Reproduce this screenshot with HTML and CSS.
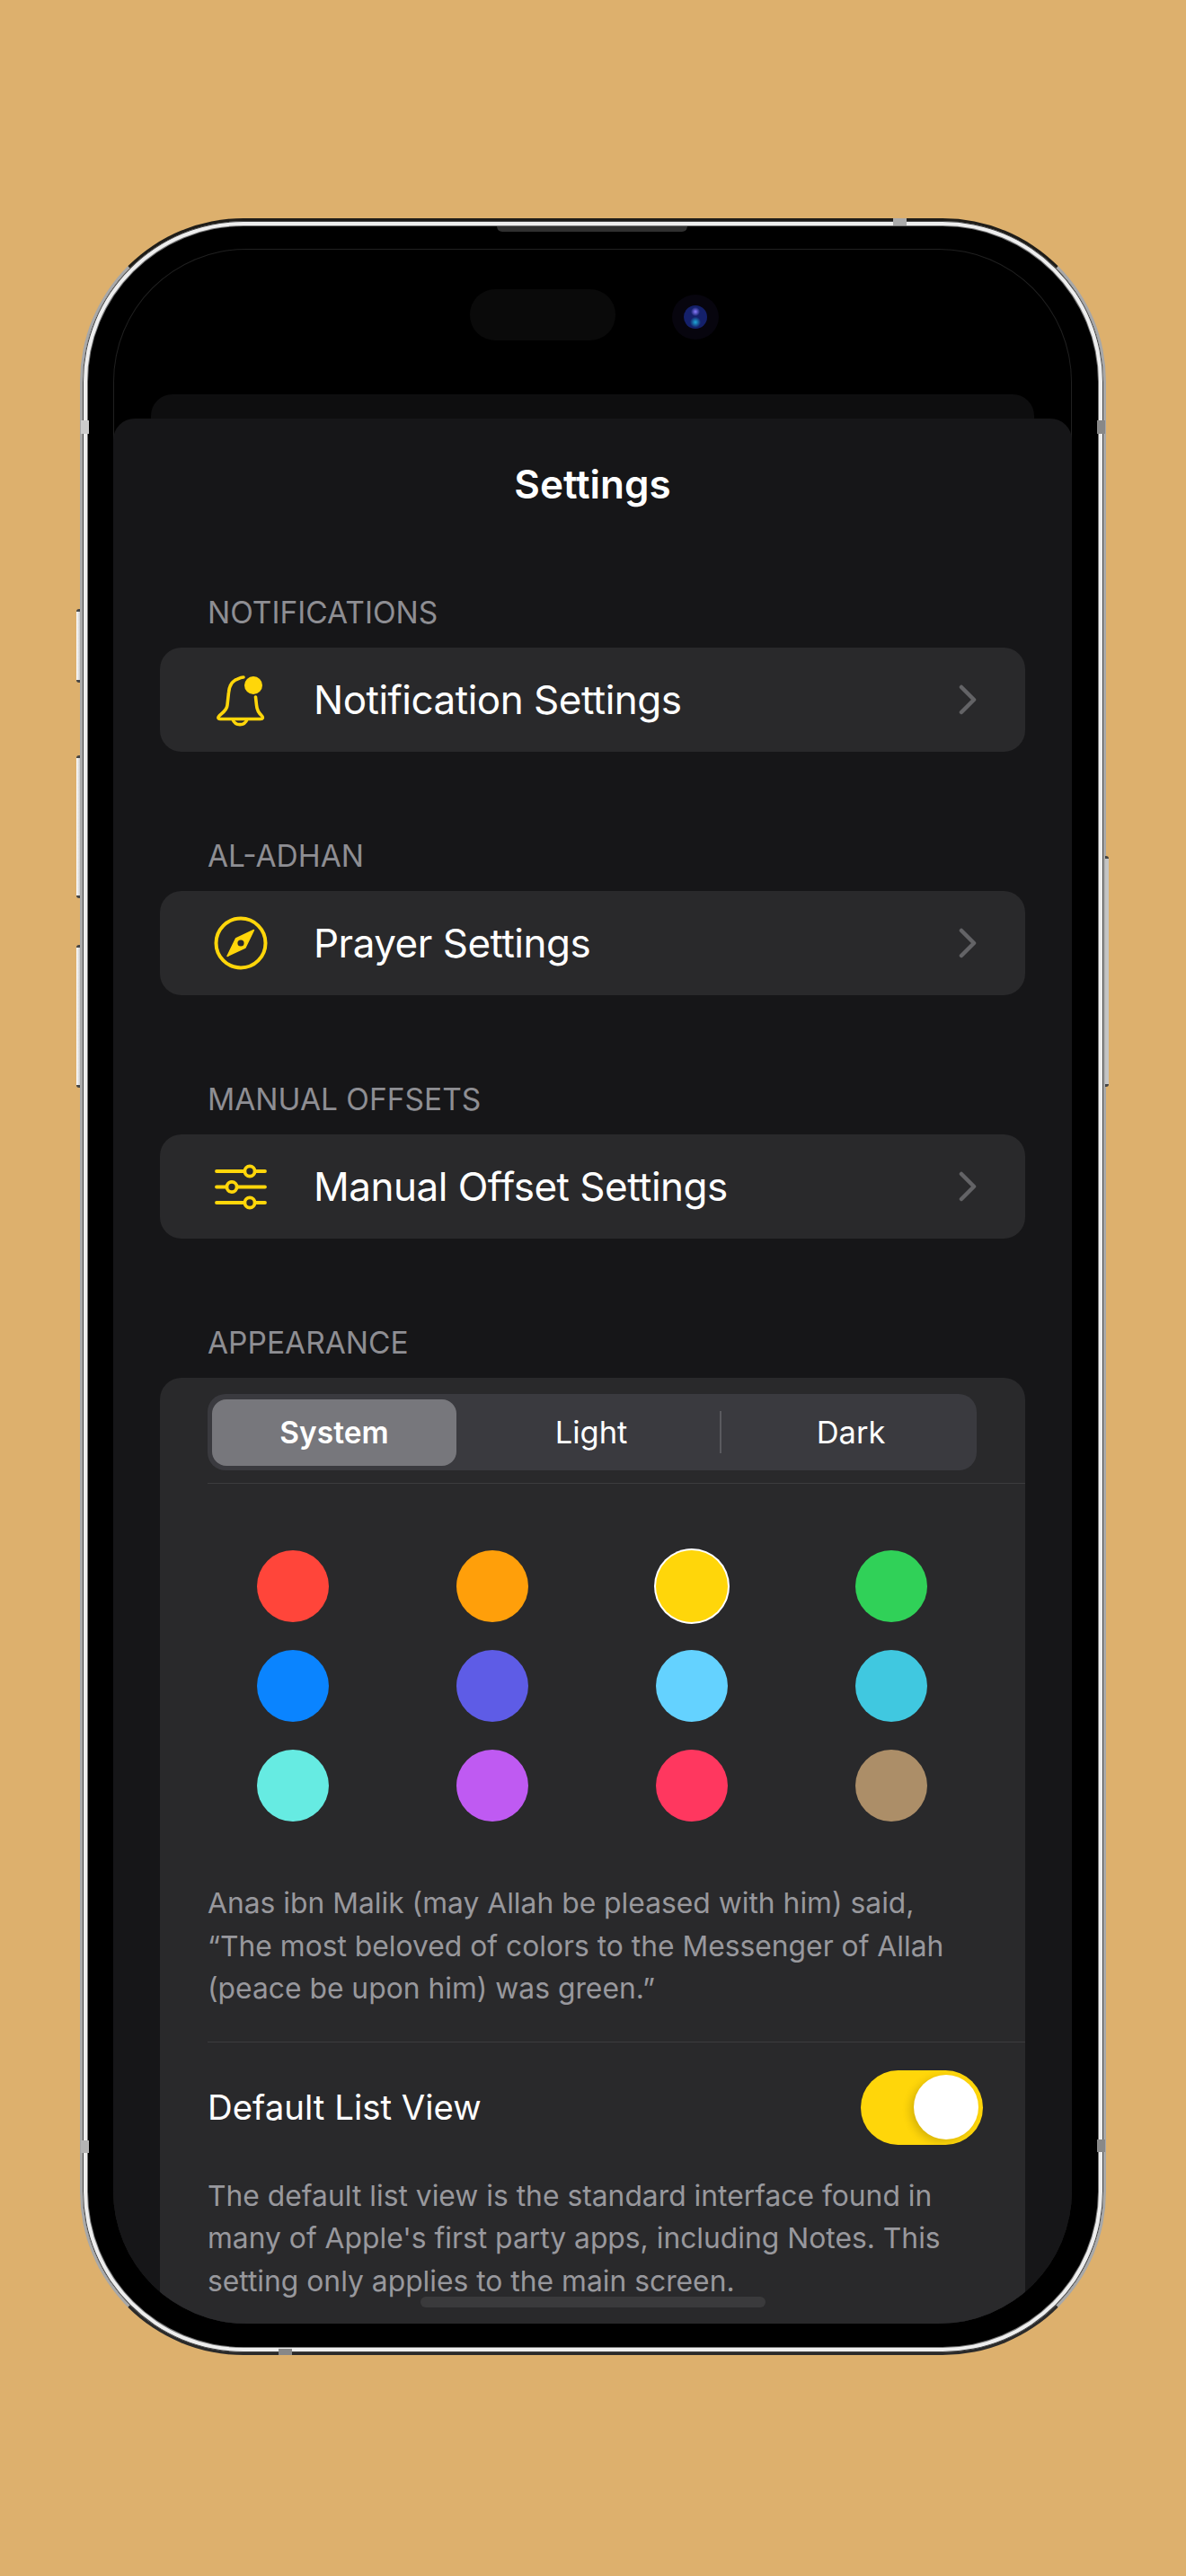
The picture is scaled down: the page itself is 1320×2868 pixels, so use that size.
FILE: index.html
```html
<!DOCTYPE html>
<html lang="en">
<head>
    <meta charset="UTF-8">
    <meta name="viewport" content="width=device-width, initial-scale=1.0">
    <title>Settings</title>
    <link rel="stylesheet" href="styles.css">
</head>

<body>
    <div class="phone">
        <span class="btn btn-action"></span>
        <span class="btn btn-vol-up"></span>
        <span class="btn btn-vol-down"></span>
        <span class="btn btn-power"></span>
        <span class="band band-left-top"></span>
        <span class="band band-right-top"></span>
        <span class="band band-left-bottom"></span>
        <span class="band band-right-bottom"></span>
        <span class="band band-top"></span>
        <span class="band band-bottom"></span>
        <span class="speaker"></span>

        <div class="screen">
            <div class="status">
                <div class="island"></div>
                <div class="camera"><span class="lens"></span></div>
            </div>
            <div class="sheet-behind"></div>

            <main class="sheet">
                <h1>Settings</h1>

                <section>
                    <h2>NOTIFICATIONS</h2>
                    <a class="card row">
                        <svg class="icon" viewBox="0 0 60 64" fill="none" stroke="#ffd60a" stroke-width="3.6" stroke-linecap="round" stroke-linejoin="round">
                            <path d="M33 7C29 7 27 9 24 10C19 13 17 18 16.5 24L15 38C14.5 44 9 47 6 50C4 52 5 53.5 7 53.5L52 53.5C54.5 53.5 55 52 53.5 50C50 47 48 44 47.5 38L46.5 29"/>
                            <path d="M21 54A8.5 8.5 0 0 0 37 54"/>
                            <circle cx="44" cy="16" r="10" fill="#ffd60a" stroke="none"/>
                        </svg>
                        <span class="row-text">Notification Settings</span>
                        <svg class="chevron" viewBox="0 0 20 34" fill="none" stroke="#636366" stroke-width="4.5" stroke-linecap="round" stroke-linejoin="round"><path d="M3 3L17 17L3 31"/></svg>
                    </a>
                </section>

                <section>
                    <h2>AL-ADHAN</h2>
                    <a class="card row">
                        <svg class="icon" viewBox="0 0 60 64">
                            <circle cx="30" cy="32" r="27.5" fill="none" stroke="#ffd60a" stroke-width="4"/>
                            <path d="M44.5 17.5L35 37L15 46.5L24.500 27Z" fill="#ffd60a" stroke="#ffd60a" stroke-width="1.5" stroke-linejoin="round"/>
                            <circle cx="30" cy="32" r="3.6" fill="#29292b"/>
                        </svg>
                        <span class="row-text">Prayer Settings</span>
                        <svg class="chevron" viewBox="0 0 20 34" fill="none" stroke="#636366" stroke-width="4.5" stroke-linecap="round" stroke-linejoin="round"><path d="M3 3L17 17L3 31"/></svg>
                    </a>
                </section>

                <section>
                    <h2>MANUAL OFFSETS</h2>
                    <a class="card row">
                        <svg class="icon" viewBox="0 0 60 64" stroke="#ffd60a" stroke-width="3.8" stroke-linecap="round">
                            <path d="M3 15H57M3 32.500H57M3 50H57"/>
                            <circle cx="40" cy="15" r="5.600" fill="#29292b"/>
                            <circle cx="20" cy="32.500" r="5.600" fill="#29292b"/>
                            <circle cx="40" cy="50" r="5.600" fill="#29292b"/>
                        </svg>
                        <span class="row-text">Manual Offset Settings</span>
                        <svg class="chevron" viewBox="0 0 20 34" fill="none" stroke="#636366" stroke-width="4.5" stroke-linecap="round" stroke-linejoin="round"><path d="M3 3L17 17L3 31"/></svg>
                    </a>
                </section>

                <section>
                    <h2>APPEARANCE</h2>
                    <div class="card appearance">
                        <div class="segmented">
                            <span class="seg seg-system">System</span>
                            <span class="seg seg-light">Light</span>
                            <span class="seg-divider"></span>
                            <span class="seg seg-dark">Dark</span>
                        </div>
                        <hr class="line line-first">

                        <div class="swatches">
                            <span class="swatch red"></span>
                            <span class="swatch orange"></span>
                            <span class="swatch yellow selected"></span>
                            <span class="swatch green"></span>
                            <span class="swatch blue"></span>
                            <span class="swatch indigo"></span>
                            <span class="swatch sky"></span>
                            <span class="swatch cyan"></span>
                            <span class="swatch mint"></span>
                            <span class="swatch purple"></span>
                            <span class="swatch pink"></span>
                            <span class="swatch brown"></span>
                        </div>

                        <p class="note note-quote">Anas ibn Malik (may Allah be pleased with him) said,<br>“The most beloved of colors to the Messenger of Allah<br>(peace be upon him) was green.”</p>
                        <hr class="line">

                        <div class="toggle-row">
                            <span class="toggle-label">Default List View</span>
                            <span class="toggle"><span class="thumb"></span></span>
                        </div>
                        <p class="note note-list">The default list view is the standard interface found in<br>many of Apple's first party apps, including Notes. This<br>setting only applies to the main screen.</p>
                    </div>
                </section>
            </main>

            <div class="home-bar"></div>
        </div>
    </div>
</body>
</html>
```

FILE: styles.css
```css
html, body {
    height: 2868px;
}

body {
    margin: 0;
    overflow: hidden;
    background-color: #ddb06d;
    font-family: Inter, "Liberation Sans", sans-serif;
    color: #fff;
}

.phone {
    position: relative;
    box-sizing: border-box;
    width: 1142px;
    height: 2379px;
    margin: 243px auto 0;
    padding: 31px 35px 0 34px;
    background: #000;
    border: 3px solid #a8a8a8;
    border-top-color: #1e1c18;
    border-bottom-color: #2a2a2a;
    border-radius: 182px;
    box-shadow: inset 0 0 0 1px #444, inset 0 0 0 5px #eee, inset 0 0 0 6px #777;
}

/* side buttons */
.btn {
    position: absolute;
    box-sizing: border-box;
    width: 4px;
    background: linear-gradient(to right, #fff, #ccc);
    border-top: 3px solid #444;
    border-bottom: 3px solid #444;
    border-radius: 3px 0 0 3px;
}

.btn-action { left: -7px; top: 432px; height: 82px; }
.btn-vol-up { left: -7px; top: 595px; height: 159px; }
.btn-vol-down { left: -7px; top: 806px; height: 159px; }

.btn-power {
    right: -6px;
    top: 707px;
    height: 257px;
    width: 4px;
    background: #c4c4c4;
    border-radius: 0 3px 3px 0;
}

/* antenna bands */
.band {
    position: absolute;
    background: #b4b4b4;
}

.band-left-top { left: -2px; top: 222px; width: 9px; height: 15px; background: #ccc; }
.band-right-top { right: -2px; top: 222px; width: 9px; height: 15px; background: #888; }
.band-left-bottom { left: -2px; top: 2137px; width: 9px; height: 14px; }
.band-right-bottom { right: -2px; top: 2136px; width: 9px; height: 14px; background: #888; }
.band-top { left: 902px; top: -3px; width: 15px; height: 8px; background: #aaa; }
.band-bottom { left: 218px; bottom: -3px; width: 15px; height: 7px; background: #888; }

.speaker {
    position: absolute;
    left: 461px;
    top: 6px;
    width: 212px;
    height: 6px;
    background: #303030;
    border-radius: 0 0 6px 6px;
}

.screen {
    position: relative;
    height: 2310px;
    overflow: hidden;
    background: #000;
    border-radius: 148px;
    box-shadow: inset 0 0 0 1px #202020;
}

.status {
    display: flex;
    align-items: center;
    height: 57px;
    padding: 45px 0 60px 397px;
    gap: 63px;
}

.island {
    width: 162px;
    height: 57px;
    background: #0a0a0a;
    border-radius: 28px;
}

.camera {
    display: flex;
    align-items: center;
    justify-content: center;
    width: 52px;
    height: 50px;
    margin-top: 4px;
    background: #07050e;
    border-radius: 50%;
}

.lens {
    width: 26px;
    height: 26px;
    border-radius: 50%;
    background:
        radial-gradient(circle 5px at 50% 27%, #8a7cff, transparent),
        radial-gradient(circle 6px at 50% 72%, #1ea8d8, transparent),
        #14206a;
}

.sheet-behind {
    height: 27px;
    margin: 0 42px;
    background: #0e0e0f;
    border-radius: 24px 24px 0 0;
}

.sheet {
    padding: 48px 52px 0;
    background: #161618;
    border-radius: 24px 24px 0 0;
}

h1 {
    margin: 0 0 98px;
    height: 50px;
    font-size: 44px;
    line-height: 50px;
    font-weight: 600;
    text-align: center;
}

section {
    margin-bottom: 96px;
}

h2 {
    margin: 0 0 19px 53px;
    font-size: 33.500px;
    line-height: 40px;
    font-weight: 400;
    color: #8e8e93;
}

.card {
    background: #29292b;
    border-radius: 24px;
}

.row {
    display: flex;
    align-items: center;
    height: 116px;
    padding-left: 60px;
}

.icon {
    width: 60px;
    height: 64px;
    margin-right: 51px;
    flex-shrink: 0;
}

.row-text {
    flex: 1;
    font-size: 44px;
    letter-spacing: -0.5px;
}

.chevron {
    width: 20px;
    height: 36px;
    margin-right: 54px;
}

.appearance {
    padding: 18px 0 80px 53px;
}

.segmented {
    display: flex;
    align-items: center;
    box-sizing: border-box;
    width: 856px;
    height: 85px;
    padding: 0 5px;
    background: #3a3a3f;
    border-radius: 20px;
}

.seg {
    box-sizing: border-box;
    font-size: 34.500px;
    line-height: 74px;
    text-align: center;
}

.seg-system {
    width: 272px;
    font-size: 33.500px;
    font-weight: 600;
    background: #77777c;
    border-radius: 16px;
}

.seg-light {
    width: 293px;
    padding-left: 7px;
}

.seg-divider {
    width: 2px;
    height: 47px;
    background: #5a5a5f;
}

.seg-dark {
    width: 279px;
    padding-left: 9px;
}

.line {
    height: 1px;
    margin: 0;
    border: 0;
    background: #3c3c3e;
}

.line-first {
    margin-top: 14px;
}

.swatches {
    display: grid;
    grid-template-columns: repeat(4, 222px);
    row-gap: 31px;
    justify-items: center;
    margin: 74px 0 67px -16px;
}

.swatch {
    width: 80px;
    height: 80px;
    border-radius: 50%;
}

.swatch.selected { box-shadow: 0 0 0 2px #fff; }

.red { background: #ff453a; }
.orange { background: #ff9f0a; }
.yellow { background: #ffd60a; }
.green { background: #30d158; }
.blue { background: #0a84ff; }
.indigo { background: #5e5ce6; }
.sky { background: #64d2ff; }
.cyan { background: #40c8e0; }
.mint { background: #66ebe2; }
.purple { background: #bf5af2; }
.pink { background: #ff375f; }
.brown { background: #ac8e68; }

.note {
    margin: 0;
    font-size: 31.800px;
    line-height: 47.500px;
    color: #98989d;
}

.note-quote {
    margin-bottom: 35px;
}

.note-list {
    margin-top: 1px;
}

.toggle-row {
    display: flex;
    align-items: center;
    justify-content: space-between;
    height: 83px;
    padding: 31px 47px 32px 0;
}

.toggle-label {
    font-size: 38.400px;
}

.toggle {
    display: flex;
    align-items: center;
    justify-content: flex-end;
    box-sizing: border-box;
    width: 136px;
    height: 83px;
    padding-right: 5px;
    background: #ffd60a;
    border-radius: 42px;
}

.thumb {
    width: 72px;
    height: 72px;
    background: #fff;
    border-radius: 50%;
    box-shadow: -4px 3px 10px rgba(0, 0, 0, 0.16);
}

.home-bar {
    position: absolute;
    left: 342px;
    bottom: 18px;
    width: 384px;
    height: 12px;
    background: #3a3a3c;
    border-radius: 6px;
}
```
